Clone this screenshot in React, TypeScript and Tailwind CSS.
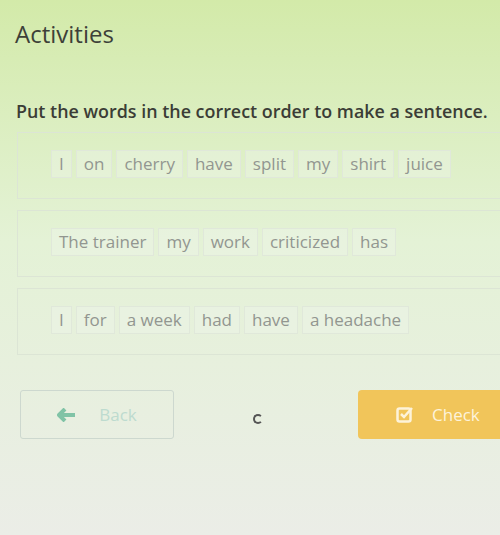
import React from "react";

const rows: string[][] = [
  ["I", "on", "cherry", "have", "split", "my", "shirt", "juice"],
  ["The trainer", "my", "work", "criticized", "has"],
  ["I", "for", "a week", "had", "have", "a headache"],
];

function Chip({ w }: { w: string }) {
  return (
    <div className="h-[28px] px-[7px] flex items-center border border-[#e0e8da] bg-[#eef5ea]/40 text-[17px] leading-none text-[#929690]">
      {w}
    </div>
  );
}

export default function App() {
  return (
    <div
      className="w-[500px] h-[535px] overflow-hidden bg-gradient-to-b from-[#d3eaa9] via-[#e4f2d6] via-45% to-[#ebede7]"
      style={{ fontFamily: '"Open Sans", sans-serif' }}
    >
      <div className="pl-[15px] pt-[18px] text-[24px] leading-[32px] text-[#3d4038]">Activities</div>
      <div className="pl-[16px] pt-[49px] text-[17.9px] leading-[24px] font-semibold text-[#3b3d36] whitespace-nowrap">
        Put the words in the correct order to make a sentence.
      </div>
      <div className="ml-[17px] mt-[9px] flex flex-col gap-[11px]">
        {rows.map((r, i) => (
          <div
            key={i}
            className="h-[67px] border border-r-0 border-[#dce5d5] flex items-center gap-[4px] pl-[33px] pb-[4px]"
          >
            {r.map((w, j) => (
              <Chip key={j} w={w} />
            ))}
          </div>
        ))}
      </div>
      <div className="mt-[35px] flex items-center">
        <div className="ml-[20px] w-[154px] h-[49px] border border-[#cdd8cf] rounded-[3px] flex items-center justify-center gap-[22px]">
          <svg width="20" height="14" viewBox="0 0 20 14">
            <path d="M8 1 L2 7 L8 13 M2 7 H18" stroke="#80c3a6" strokeWidth="4" fill="none" strokeLinejoin="round" />
          </svg>
          <span className="text-[17px] text-[#bddbcf]">Back</span>
        </div>
        <div className="ml-[79px] mt-[8px] w-[10px] h-[10px] rounded-full border-2 border-[#555] border-r-transparent" />
        <div className="ml-[95px] flex-1 h-[49px] bg-[#f1c55a] rounded-l-[4px] flex items-center pl-[38px] gap-[18px]">
          <svg width="18" height="17" viewBox="0 0 18 17">
            <rect x="1.5" y="2.5" width="13" height="13" rx="2" stroke="#fdf3da" strokeWidth="2.5" fill="none" />
            <path d="M5 8 L8 11 L16 2" stroke="#fdf3da" strokeWidth="2.5" fill="none" />
          </svg>
          <span className="text-[17px] text-[#fdf3da]">Check</span>
        </div>
      </div>
    </div>
  );
}
